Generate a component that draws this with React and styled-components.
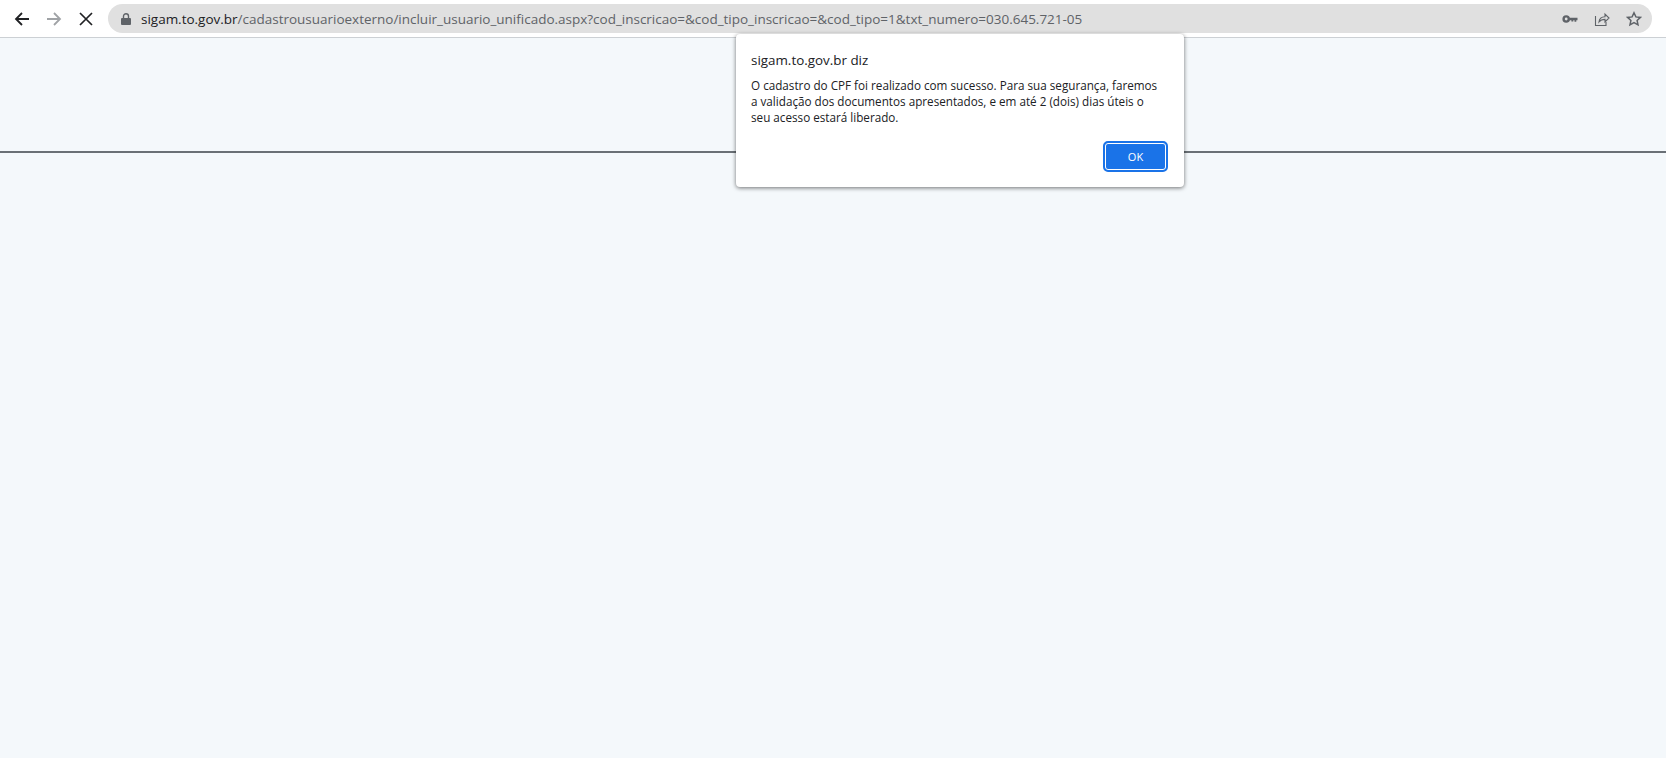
import React from 'react';
import styled, { createGlobalStyle } from 'styled-components';

const GlobalStyle = createGlobalStyle`
    html, body { margin: 0; padding: 0; height: 100%; overflow: hidden; }
    body { background: #f4f8fb; font-family: "Open Sans", "Liberation Sans", sans-serif; }
`;

const Page = styled.div`
    position: relative;
    width: 1666px;
    height: 758px;
    display: flex;
    flex-direction: column;
`;

const Toolbar = styled.div`
    height: 38px;
    box-sizing: border-box;
    background: #fff;
    display: flex;
    align-items: flex-start;
    padding: 4px 14px 0 0;
    border-bottom: 1px solid #ccd0d4;
    flex-shrink: 0;
`;

const NavButtons = styled.div`
    width: 108px;
    height: 29px;
    flex-shrink: 0;
    display: flex;
    align-items: center;
    padding-left: 13px;
    box-sizing: border-box;
    gap: 14px;
`;

const Omnibox = styled.div`
    flex: 1;
    height: 29px;
    border-radius: 15px;
    background: #e0e0e0;
    display: flex;
    align-items: center;
    padding: 0 10px 0 13px;
`;

const Url = styled.div`
    flex: 1;
    margin-left: 10px;
    font-size: 13.5px;
    letter-spacing: -0.01px;
    color: #5f6368;
    white-space: nowrap;
    b { font-weight: 400; color: #202124; }
`;

const OmniIcons = styled.div`
    display: flex;
    align-items: center;
    gap: 16px;
`;

const Banner = styled.div`
    height: 113px;
    border-bottom: 2px solid #6a7076;
    flex-shrink: 0;
`;

const Dialog = styled.div`
    position: absolute;
    left: 736px;
    top: 34px;
    width: 448px;
    height: 153px;
    box-sizing: border-box;
    padding: 17px 16px 15px 15px;
    background: #fff;
    border-radius: 4px;
    box-shadow: 0 1px 4px rgba(0, 0, 0, 0.55);
    display: flex;
    flex-direction: column;
`;

const DialogTitle = styled.div`
    font-size: 13.4px;
    line-height: 18px;
    color: #202124;
`;

const DialogText = styled.div`
    margin-top: 8px;
    font-size: 11.7px;
    line-height: 16px;
    color: #202124;
`;

const DialogActions = styled.div`
    margin-top: auto;
    display: flex;
    justify-content: flex-end;
`;

const OkButton = styled.button`
    width: 65px;
    height: 31px;
    box-sizing: border-box;
    background: #1a73e8;
    border: 2px solid #1a73e8;
    border-radius: 5px;
    outline: none;
    box-shadow: inset 0 0 0 1px #fff;
    color: #fff;
    font-family: inherit;
    font-size: 11px;
    padding: 0 0 1px;
`;

const Back = () => (
    <svg width="18" height="18" viewBox="0 0 18 18" fill="none" stroke="#202124" strokeWidth="1.8">
        <path d="M16 9H3M9 3L3 9l6 6" />
    </svg>
);

const Forward = () => (
    <svg width="18" height="18" viewBox="0 0 18 18" fill="none" stroke="#a0a3a6" strokeWidth="1.8">
        <path d="M2 9h13M9 3l6 6-6 6" />
    </svg>
);

const Stop = () => (
    <svg width="18" height="18" viewBox="0 0 18 18" fill="none" stroke="#202124" strokeWidth="1.7">
        <path d="M3 3l12 12M15 3L3 15" />
    </svg>
);

const Lock = () => (
    <svg width="10" height="12" viewBox="0 0 10 12" style={{ flexShrink: 0 }}>
        <path fill="#5f6368" d="M1 5h8a1 1 0 0 1 1 1v5a1 1 0 0 1-1 1H1a1 1 0 0 1-1-1V6a1 1 0 0 1 1-1z" />
        <path fill="none" stroke="#5f6368" strokeWidth="1.4" d="M2.5 5V3.2a2.5 2.5 0 0 1 5 0V5" />
    </svg>
);

const Key = () => (
    <svg width="16" height="16" viewBox="0 0 16 16">
        <circle cx="4.2" cy="8" r="2.6" fill="none" stroke="#5f6368" strokeWidth="2.4" />
        <path fill="#5f6368" d="M6.5 6.8h9v2.4h-1.2v1.6h-1.8V9.2h-1.2v1.2H9.4V9.2H6.5z" />
    </svg>
);

const Share = () => (
    <svg width="16" height="16" viewBox="0 0 16 16" fill="none" stroke="#5f6368" strokeWidth="1.1">
        <path d="M1.5 5v9.5h10.5V11" />
        <path d="M5 11c.3-3.4 2.6-5.2 6-5.3V3l4 4-4 4V8.4c-2.6 0-4.6.8-6 2.6z" />
    </svg>
);

const Star = () => (
    <svg width="16" height="16" viewBox="0 0 16 16" fill="none" stroke="#5f6368" strokeWidth="1.5">
        <path d="M8 1.8l1.9 4.1 4.5.5-3.3 3 .9 4.4L8 11.6l-4 2.2.9-4.4-3.3-3 4.5-.5z" />
    </svg>
);

export default function App() {
    return (
        <Page>
            <GlobalStyle />
            <Toolbar>
                <NavButtons>
                    <Back />
                    <Forward />
                    <Stop />
                </NavButtons>
                <Omnibox>
                    <Lock />
                    <Url>
                        <b>sigam.to.gov.br</b>/cadastrousuarioexterno/incluir_usuario_unificado.aspx?cod_inscricao=&amp;cod_tipo_inscricao=&amp;cod_tipo=1&amp;txt_numero=030.645.721-05
                    </Url>
                    <OmniIcons>
                        <Key />
                        <Share />
                        <Star />
                    </OmniIcons>
                </Omnibox>
            </Toolbar>
            <Banner />
            <Dialog>
                <DialogTitle>sigam.to.gov.br diz</DialogTitle>
                <DialogText>
                    O cadastro do CPF foi realizado com sucesso. Para sua segurança, faremos<br />
                    a validação dos documentos apresentados, e em até 2 (dois) dias úteis o<br />
                    seu acesso estará liberado.
                </DialogText>
                <DialogActions>
                    <OkButton>OK</OkButton>
                </DialogActions>
            </Dialog>
        </Page>
    );
}
